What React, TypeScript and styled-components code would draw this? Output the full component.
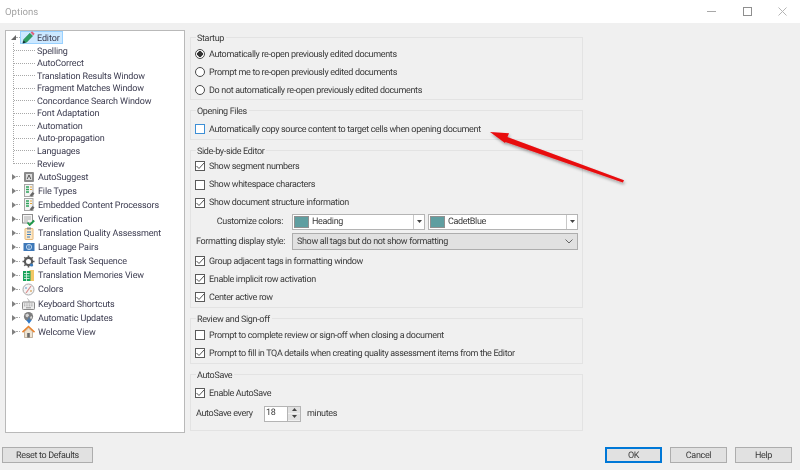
import React from "react";
import styled, { createGlobalStyle } from "styled-components";

const FONT = `Roboto, "Liberation Sans", sans-serif`;

const GlobalStyle = createGlobalStyle`
  html, body {
    margin: 0;
    padding: 0;
    background: #f0f0f0;
  }
  body {
    font-family: ${FONT};
    font-size: 9px;
    letter-spacing: -0.34px;
    text-rendering: geometricPrecision;
    color: #3a3a3a;
  }
`;

const PencilIcon = () => (
  <svg width="13" height="13" viewBox="0 0 13 13">
    <path d="M0.8 12.2l1-3.8 6-6.2 2.8 2.8-6 6.2z" fill="#2f9e63" stroke="#1f7a48" strokeWidth="0.5" />
    <path d="M8.5 1.5l1.6-1.2 2.5 2.5-1.3 1.6z" fill="#e0607e" />
    <path d="M0.8 12.2l0.8-2.8 2 2z" fill="#123" />
  </svg>
);

const AutoSuggestIcon = () => (
  <svg width="12" height="12" viewBox="0 0 12 12">
    <rect x="1" y="1" width="10" height="10" rx="1" fill="#8a8a8a" />
    <rect x="3" y="3" width="6" height="6" fill="#dcdcdc" />
    <path d="M4.2 8l1.8-4 1.8 4" fill="none" stroke="#555" strokeWidth="1" />
  </svg>
);

const FileTypesIcon = () => (
  <svg width="12" height="13" viewBox="0 0 12 13">
    <rect x="1.5" y="0.5" width="8.5" height="12" fill="#f4f4f4" stroke="#a5a5a5" />
    <path d="M3 3h3M3 5.5h3M3 8h3" stroke="#2ea35b" strokeWidth="1.3" />
    <path d="M7 3h2M7 5.5h2" stroke="#e0a43a" strokeWidth="1" />
    <path d="M6.5 11.5l3-3.5 2 1.5-2.5 3z" fill="#666" />
  </svg>
);

const VerificationIcon = () => (
  <svg width="13" height="13" viewBox="0 0 13 13">
    <rect x="0.5" y="1.5" width="10" height="8.5" fill="#f6f6f6" stroke="#8e8e8e" />
    <path d="M2 4h7M2 6h7M2 8h4" stroke="#9a9a9a" strokeWidth="0.8" />
    <path d="M5.5 9.5l2.2 2.5 4.5-4.5" fill="none" stroke="#1d9a4a" strokeWidth="1.8" />
  </svg>
);

const QualityIcon = () => (
  <svg width="12" height="13" viewBox="0 0 12 13">
    <rect x="2" y="1.5" width="8" height="11" rx="0.5" fill="#fbe7c6" stroke="#e7b878" />
    <rect x="4" y="0.5" width="4" height="2" fill="#8a8a8a" />
    <path d="M4 5h4M4 7.5h4M4 10h3" stroke="#3a7cc0" strokeWidth="1" />
  </svg>
);

const LanguageIcon = () => (
  <svg width="12" height="12" viewBox="0 0 12 12">
    <rect x="0.5" y="2" width="11" height="8" fill="#3e78b8" />
    <circle cx="6" cy="6" r="2.6" fill="none" stroke="#bcd6ef" strokeWidth="1" />
    <path d="M6 3.4v5.2" stroke="#bcd6ef" strokeWidth="0.8" />
  </svg>
);

const GearIcon = () => (
  <svg width="13" height="13" viewBox="0 0 13 13">
    <circle cx="6.5" cy="6.5" r="3.6" fill="none" stroke="#5a5a5a" strokeWidth="2.2" />
    <path
      d="M6.5 0.5v2.2M6.5 10.3v2.2M0.5 6.5h2.2M10.3 6.5h2.2M2.3 2.3l1.5 1.5M9.2 9.2l1.5 1.5M2.3 10.7l1.5-1.5M9.2 3.8l1.5-1.5"
      stroke="#5a5a5a"
      strokeWidth="1.6"
    />
    <circle cx="9.5" cy="10" r="1.6" fill="#3a7cc0" />
  </svg>
);

const MemoriesIcon = () => (
  <svg width="13" height="13" viewBox="0 0 13 13">
    <rect x="7.5" y="1" width="4.5" height="11" fill="#f3c765" />
    <rect x="1" y="2" width="7.5" height="10" fill="#17a35a" />
    <path d="M2 4.5h5.5M2 7h5.5M2 9.5h5.5M4.5 2v10" stroke="#e6f6ec" strokeWidth="0.8" />
  </svg>
);

const ColorsIcon = () => (
  <svg width="13" height="13" viewBox="0 0 13 13">
    <circle cx="6.5" cy="6.5" r="5.5" fill="#f4f4f4" stroke="#a8a8a8" />
    <path d="M4 10l5-7" stroke="#d98a8a" strokeWidth="1.2" />
    <circle cx="4" cy="5" r="1" fill="#8fb6d8" />
    <circle cx="9" cy="8" r="1" fill="#e0b070" />
  </svg>
);

const KeyboardIcon = () => (
  <svg width="13" height="12" viewBox="0 0 13 12">
    <path d="M7 4V2.5C7 1.5 5.5 1.5 5.5 0.5" fill="none" stroke="#8a8a8a" strokeWidth="0.7" />
    <rect x="0.5" y="4" width="12" height="7.5" rx="0.8" fill="#ececec" stroke="#8a8a8a" />
    <path d="M2 6h9M2 7.8h9" stroke="#8a8a8a" strokeWidth="0.8" strokeDasharray="1 0.7" />
    <path d="M4 9.8h5" stroke="#8a8a8a" strokeWidth="0.9" />
  </svg>
);

const UpdatesIcon = () => (
  <svg width="13" height="13" viewBox="0 0 13 13">
    <circle cx="6.5" cy="5.5" r="4.6" fill="#7d7d7d" />
    <path d="M3.5 3.5l2.5-1 1.2 2-2 2-1.5-1zM8 6l1.8-1 .4 2-1.5 1.2z" fill="#d5d5d5" />
    <path d="M7 6.5v3M4.8 9.2h4.4L7 12.3z" fill="#2f79c8" stroke="#2f79c8" strokeWidth="0.8" />
  </svg>
);

const HomeIcon = () => (
  <svg width="13" height="13" viewBox="0 0 13 13">
    <path d="M2.5 6.5v6h8v-6L6.5 3z" fill="#efe4d2" stroke="#a08c70" strokeWidth="0.6" />
    <path d="M0.5 7.2L6.5 1.5l6 5.7" fill="none" stroke="#e8842f" strokeWidth="1.6" />
    <rect x="5.2" y="8" width="2.6" height="4.5" fill="#6b6b6b" />
  </svg>
);

const TOP_ITEMS: { label: string; icon: React.ReactNode }[] = [
  { label: "AutoSuggest", icon: <AutoSuggestIcon /> },
  { label: "File Types", icon: <FileTypesIcon /> },
  { label: "Embedded Content Processors", icon: <FileTypesIcon /> },
  { label: "Verification", icon: <VerificationIcon /> },
  { label: "Translation Quality Assessment", icon: <QualityIcon /> },
  { label: "Language Pairs", icon: <LanguageIcon /> },
  { label: "Default Task Sequence", icon: <GearIcon /> },
  { label: "Translation Memories View", icon: <MemoriesIcon /> },
  { label: "Colors", icon: <ColorsIcon /> },
  { label: "Keyboard Shortcuts", icon: <KeyboardIcon /> },
  { label: "Automatic Updates", icon: <UpdatesIcon /> },
  { label: "Welcome View", icon: <HomeIcon /> },
];

const EDITOR_CHILDREN = [
  "Spelling",
  "AutoCorrect",
  "Translation Results Window",
  "Fragment Matches Window",
  "Concordance Search Window",
  "Font Adaptation",
  "Automation",
  "Auto-propagation",
  "Languages",
  "Review",
];

const Tree = () => (
  <TreePanel>
    <TopRow>
      <ExpandedArrow />
      <Dots $width={4} />
      <SelectedItem>
        <IconSlot>
          <PencilIcon />
        </IconSlot>
        <TreeLabel $gap={2}>Editor</TreeLabel>
      </SelectedItem>
    </TopRow>
    <ChildList>
      {EDITOR_CHILDREN.map((child) => (
        <ChildRow key={child}>
          <Dots $width={21} />
          <TreeLabel $gap={2}>{child}</TreeLabel>
        </ChildRow>
      ))}
    </ChildList>
    {TOP_ITEMS.map((item) => (
      <TopRow key={item.label}>
        <CollapsedArrow />
        <Dots $width={4} />
        <ItemIcon>{item.icon}</ItemIcon>
        <TreeLabel $gap={3}>{item.label}</TreeLabel>
      </TopRow>
    ))}
  </TreePanel>
);

const Radio = ({ label, checked }: { label: string; checked?: boolean }) => (
  <OptionRow>
    <RadioMark $checked={checked} />
    <OptionText>{label}</OptionText>
  </OptionRow>
);

const Check = ({ label, checked, focused }: { label: string; checked?: boolean; focused?: boolean }) => (
  <OptionRow>
    <CheckMark $focused={focused}>
      {checked && (
        <svg width="10" height="10" viewBox="0 0 10 10">
          <path d="M1.5 5l2.5 2.5 5-5.5" fill="none" stroke="#555" strokeWidth="1" />
        </svg>
      )}
    </CheckMark>
    <OptionText>{label}</OptionText>
  </OptionRow>
);

const ColorCombo = ({ label, width }: { label: string; width: number }) => (
  <Combo $width={width}>
    <Swatch />
    <ComboText>{label}</ComboText>
    <ComboButton>
      <svg width="5" height="3" viewBox="0 0 5 3">
        <path d="M0 0h5L2.5 3z" fill="#444" />
      </svg>
    </ComboButton>
  </Combo>
);

export default function App() {
  return (
    <Window>
      <GlobalStyle />
      <TitleBar>
        <Title>Options</Title>
        <WindowControls>
          <svg width="9" height="9" viewBox="0 0 9 9">
            <path d="M0 4.5h9" stroke="#a8a8a8" />
          </svg>
          <svg width="9" height="9" viewBox="0 0 9 9">
            <rect x="0.5" y="0.5" width="8" height="8" fill="none" stroke="#8f8f8f" />
          </svg>
          <svg width="9" height="9" viewBox="0 0 9 9">
            <path d="M0.5 0.5l8 8M8.5 0.5l-8 8" stroke="#b5b5b5" />
          </svg>
        </WindowControls>
      </TitleBar>
      <Body>
        <Main>
          <Tree />
          <Settings>
            <Group $height={63} $rowsTop={7}>
              <GroupTitle>Startup</GroupTitle>
              <Radio checked label="Automatically re-open previously edited documents" />
              <Radio label="Prompt me to re-open previously edited documents" />
              <Radio label="Do not automatically re-open previously edited documents" />
            </Group>
            <Group $height={30} $rowsTop={9}>
              <GroupTitle>Opening Files</GroupTitle>
              <Check focused label="Automatically copy source content to target cells when opening document" />
            </Group>
            <Group $height={158} $rowsTop={6.4}>
              <GroupTitle>Side-by-side Editor</GroupTitle>
              <Check checked label="Show segment numbers" />
              <Check label="Show whitespace characters" />
              <Check checked label="Show document structure information" />
              <FieldRow>
                <FieldLabel>Customize colors:</FieldLabel>
                <ColorCombo label="Heading" width={133} />
                <ColorCombo label="CadetBlue" width={150} />
              </FieldRow>
              <FieldRow>
                <FieldLabel>Formatting display style:</FieldLabel>
                <Select>
                  <OptionText>Show all tags but do not show formatting</OptionText>
                  <svg width="8" height="5" viewBox="0 0 8 5">
                    <path d="M0.5 0.5L4 4l3.5-3.5" fill="none" stroke="#666" />
                  </svg>
                </Select>
              </FieldRow>
              <Check checked label="Group adjacent tags in formatting window" />
              <Check checked label="Enable implicit row activation" />
              <Check checked label="Center active row" />
            </Group>
            <Group $height={46} $rowsTop={7}>
              <GroupTitle>Review and Sign-off</GroupTitle>
              <Check label="Prompt to complete review or sign-off when closing a document" />
              <Check checked label="Prompt to fill in TQA details when creating quality assessment items from the Editor" />
            </Group>
            <Group $height={57} $rowsTop={9.4}>
              <GroupTitle>AutoSave</GroupTitle>
              <Check checked label="Enable AutoSave" />
              <SpinRow>
                <SpinLabel>AutoSave every</SpinLabel>
                <Spinner>
                  <SpinValue>18</SpinValue>
                  <SpinButtons>
                    <SpinButton>
                      <svg width="5" height="3" viewBox="0 0 5 3">
                        <path d="M0 3h5L2.5 0z" fill="#444" />
                      </svg>
                    </SpinButton>
                    <SpinButton>
                      <svg width="5" height="3" viewBox="0 0 5 3">
                        <path d="M0 0h5L2.5 3z" fill="#444" />
                      </svg>
                    </SpinButton>
                  </SpinButtons>
                </Spinner>
                <OptionText>minutes</OptionText>
              </SpinRow>
            </Group>
          </Settings>
        </Main>
        <Footer>
          <ResetButton>Reset to Defaults</ResetButton>
          <FooterRight>
            <DialogButton $primary>OK</DialogButton>
            <DialogButton>Cancel</DialogButton>
            <DialogButton>Help</DialogButton>
          </FooterRight>
        </Footer>
      </Body>
      <ArrowOverlay width="800" height="470" viewBox="0 0 800 470">
        <defs>
          <filter id="arrow-shadow" x="-10%" y="-20%" width="120%" height="150%">
            <feDropShadow dx="1" dy="2" stdDeviation="1.5" floodColor="#000" floodOpacity="0.35" />
          </filter>
        </defs>
        <g filter="url(#arrow-shadow)">
          <path d="M624 180.2L506 136.5l-2 5L622.8 182.6z" fill="#e8090f" />
          <path d="M490 132l19 1.2-4 9.8z" fill="#e8090f" />
        </g>
      </ArrowOverlay>
    </Window>
  );
}

const Window = styled.div`
  position: relative;
  width: 800px;
  height: 470px;
  overflow: hidden;
  background: #f0f0f0;
  filter: blur(0.3px);
`;

const TitleBar = styled.div`
  display: flex;
  align-items: center;
  justify-content: space-between;
  height: 23px;
  background: #ffffff;
`;

const Title = styled.span`
  margin-left: 5px;
  padding-top: 1px;
  font-size: 9.6px;
  letter-spacing: 0;
  color: #a3a3a3;
`;

const WindowControls = styled.div`
  display: flex;
  gap: 26.5px;
  margin-right: 13px;
`;

const Body = styled.div`
  display: flex;
  flex-direction: column;
  height: 447px;
`;

const Main = styled.div`
  display: flex;
  align-items: flex-start;
  gap: 5px;
  height: 424px;
  padding: 7px 0 0 5px;
  box-sizing: border-box;
`;

const TreePanel = styled.div`
  box-sizing: border-box;
  flex: none;
  width: 180px;
  height: 403px;
  background: #ffffff;
  border: 1px solid #b9b9b9;
`;

const TopRow = styled.div`
  display: flex;
  align-items: center;
  height: 14.08px;
  padding-left: 5px;

  &:first-child {
    height: 13.3px;
  }
`;

const ExpandedArrow = styled.span`
  flex: none;
  width: 0;
  height: 0;
  border-style: solid;
  border-width: 0 0 5px 5px;
  border-color: transparent transparent #666 transparent;
`;

const CollapsedArrow = styled.span`
  flex: none;
  width: 0;
  height: 0;
  margin-left: 1px;
  border-style: solid;
  border-width: 3.5px 0 3.5px 4px;
  border-color: transparent transparent transparent #808080;
`;

const Dots = styled.span<{ $width: number }>`
  flex: none;
  width: ${(p) => p.$width}px;
  border-top: 1px dotted #a8a8a8;
`;

const IconSlot = styled.span`
  display: flex;
  align-items: center;
  justify-content: center;
  flex: none;
  width: 13px;
  height: 13px;
`;

const ItemIcon = styled(IconSlot)`
  margin-left: 2px;
`;

const SelectedItem = styled.span`
  box-sizing: border-box;
  display: flex;
  align-items: center;
  width: 43px;
  height: 13px;
  padding-left: 1px;
  background: #cce8ff;
  border: 1px solid #99d1ff;
`;

const TreeLabel = styled.span<{ $gap?: number }>`
  margin-left: ${(p) => p.$gap ?? 1}px;
  padding-top: 2px;
  font-size: 9px;
  letter-spacing: -0.12px;
  line-height: 12px;
  white-space: nowrap;
  color: #3c3c50;
`;

const ChildList = styled.div`
  position: relative;
  margin-left: 7px;
  padding-left: 1px;

  &::before {
    content: "";
    position: absolute;
    left: 0;
    top: -1px;
    bottom: 6px;
    border-left: 1px dotted #a8a8a8;
  }
`;

const ChildRow = styled.div`
  display: flex;
  align-items: center;
  height: 12.55px;
`;

const Settings = styled.div`
  display: flex;
  flex-direction: column;
  gap: 10px;
  flex: none;
  width: 393px;
  margin-top: 7px;
`;

const Group = styled.div<{ $height: number; $rowsTop: number }>`
  box-sizing: border-box;
  position: relative;
  height: ${(p) => p.$height}px;
  padding: ${(p) => p.$rowsTop}px 0 0 4px;
  border: 1px solid #e3e3e3;
`;

const GroupTitle = styled.span`
  position: absolute;
  top: -5px;
  left: 5px;
  padding: 0 2px 0 1px;
  background: #f0f0f0;
  line-height: 12px;
  white-space: nowrap;
`;

const OptionRow = styled.label`
  display: flex;
  align-items: center;
  gap: 4px;
  height: 18.2px;
  white-space: nowrap;
`;

const OptionText = styled.span`
  padding-top: 1px;
`;

const RadioMark = styled.span<{ $checked?: boolean }>`
  box-sizing: border-box;
  flex: none;
  width: 10px;
  height: 10px;
  border-radius: 50%;
  border: 1px solid #4a4a4a;
  background: ${(p) => (p.$checked ? "radial-gradient(circle, #333 0 2.6px, #fff 3px)" : "#fff")};
`;

const CheckMark = styled.span<{ $focused?: boolean }>`
  box-sizing: border-box;
  display: flex;
  align-items: center;
  justify-content: center;
  flex: none;
  width: 10px;
  height: 10px;
  background: #fff;
  border: 1px solid ${(p) => (p.$focused ? "#3d8fd6" : "#5a5a5a")};

  svg {
    flex: none;
    margin: -1px;
  }
`;

const FieldRow = styled.div`
  display: flex;
  align-items: center;
  height: 20px;
  padding-left: 1px;
  white-space: nowrap;
`;

const FieldLabel = styled.span`
  flex: none;
  width: 87px;
  margin-right: 9px;
  padding-top: 1px;
  text-align: right;
`;

const Combo = styled.div<{ $width: number }>`
  box-sizing: border-box;
  display: flex;
  align-items: center;
  flex: none;
  width: ${(p) => p.$width}px;
  height: 16px;
  margin-right: 3px;
  background: #ffffff;
  border: 1px solid #b4b4b4;
`;

const Swatch = styled.span`
  flex: none;
  width: 15px;
  height: 12px;
  margin-left: 1px;
  background: #5f9ea0;
  border: 1px solid #909090;
  box-sizing: border-box;
`;

const ComboText = styled.span`
  flex: 1;
  padding: 1px 0 0 3px;
`;

const ComboButton = styled.span`
  display: flex;
  align-items: center;
  justify-content: center;
  flex: none;
  width: 10px;
  height: 100%;
  border-left: 1px solid #c8c8c8;
`;

const Select = styled.div`
  box-sizing: border-box;
  display: flex;
  align-items: center;
  justify-content: space-between;
  width: 286px;
  height: 17px;
  padding: 0 4px;
  background: #e1e1e1;
  border: 1px solid #adadad;
`;

const SpinRow = styled.div`
  display: flex;
  align-items: center;
  height: 22px;
  padding-left: 1px;
  white-space: nowrap;
`;

const SpinLabel = styled(OptionText)`
  flex: none;
  width: 68px;
`;

const Spinner = styled.div`
  box-sizing: border-box;
  display: flex;
  flex: none;
  width: 37px;
  height: 16px;
  margin-right: 6px;
  background: #ffffff;
  border: 1px solid #b4b4b4;
`;

const SpinValue = styled.span`
  flex: 1;
  padding-left: 1px;
  line-height: 13px;
`;

const SpinButtons = styled.div`
  display: flex;
  flex-direction: column;
  flex: none;
  width: 12px;
  background: #e1e1e1;
  border-left: 1px solid #b4b4b4;
`;

const SpinButton = styled.span`
  display: flex;
  align-items: center;
  justify-content: center;
  flex: 1;
  border-bottom: 1px solid #f0f0f0;
`;

const Footer = styled.div`
  display: flex;
  align-items: center;
  justify-content: space-between;
  height: 16px;
`;

const DialogButton = styled.div<{ $primary?: boolean }>`
  box-sizing: border-box;
  display: flex;
  align-items: center;
  justify-content: center;
  width: 57px;
  height: 16px;
  padding-top: 1px;
  background: #e1e1e1;
  border: ${(p) => (p.$primary ? "2px solid #0078d7" : "1px solid #adadad")};
`;

const ResetButton = styled(DialogButton)`
  width: 91px;
  margin-left: 2px;
`;

const FooterRight = styled.div`
  display: flex;
  gap: 8px;
  margin-right: 8px;
`;

const ArrowOverlay = styled.svg`
  position: absolute;
  top: 0;
  left: 0;
  pointer-events: none;
`;
